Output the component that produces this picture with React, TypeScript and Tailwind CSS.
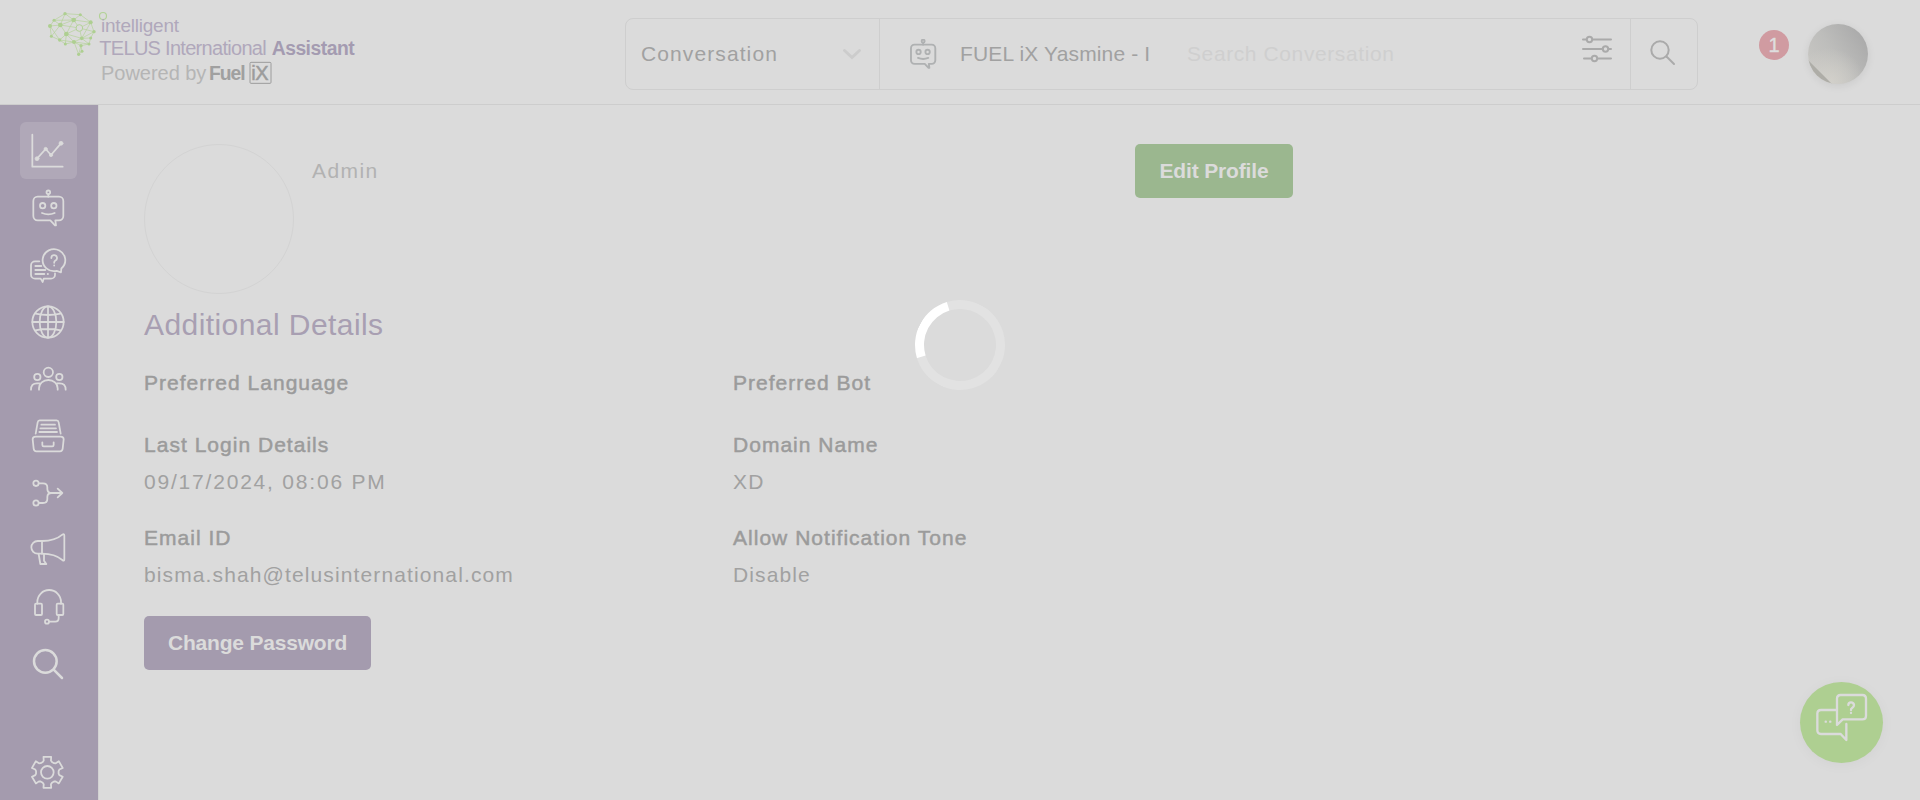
import React from "react";

const GEAR_POINTS = Array.from({ length: 6 })
  .flatMap((_, i) => {
    const base = i * 60 - 90;
    return [
      [34, -24],
      [37, -17],
      [48, -14],
      [48, 14],
      [37, 17],
      [34, 24],
    ].map(([r, offset]) => {
      const a = ((base + offset) * Math.PI) / 180;
      return `${(142 + r * Math.cos(a)).toFixed(1)},${(607 + r * Math.sin(a)).toFixed(1)}`;
    });
  })
  .join(" ");

function BotShape() {
  return (
    <>
      <circle cx="145" cy="277" r="5.5" />
      <path d="M145 283V290" />
      <path d="M151 361H113a13 13 0 0 1-13-13V303a13 13 0 0 1 13-13H177a13 13 0 0 1 13 13V348a13 13 0 0 1-13 13H166L168 376H165Z" />
      <circle cx="128" cy="317" r="8" />
      <circle cx="161.500" cy="317" r="8" />
      <path d="M126 339q19 8 38 0" />
    </>
  );
}

type NavIconProps = { viewBox: string; active?: boolean; children: React.ReactNode };

function NavIcon({ viewBox, active, children }: NavIconProps) {
  return (
    <a
      className={
        active
          ? "block size-[57px] shrink-0 rounded-md bg-[#b0a8b8]"
          : "block size-[57px] shrink-0 rounded-md"
      }
    >
      <svg
        viewBox={viewBox}
        className="size-[57px]"
        fill="none"
        stroke="#dbdbdb"
        strokeWidth="5.3"
        strokeLinecap="round"
        strokeLinejoin="round"
      >
        {children}
      </svg>
    </a>
  );
}

function Sidebar() {
  return (
    <nav className="flex w-[99px] shrink-0 flex-col border-r border-[#d2d2d2] bg-[#a49bae] pt-[17px] pl-5">
      <NavIcon viewBox="60 66 171 171" active>
        <path d="M97 104V200H188" />
        <path d="M111 176L137 147L153 165L183 130" />
        <g fill="#dbdbdb" strokeWidth="2">
          <circle cx="111" cy="176" r="6" />
          <circle cx="137" cy="147" r="5" />
          <circle cx="153" cy="165" r="5" />
          <circle cx="183" cy="130" r="6" />
        </g>
      </NavIcon>
      <NavIcon viewBox="60 237 171 171">
        <BotShape />
      </NavIcon>
      <NavIcon viewBox="60 408 171 171">
        <path d="M118 484H105a12 12 0 0 0-12 12V524a12 12 0 0 0 12 12H122L128 546L131 536H153a12 12 0 0 0 12-12V520" />
        <path d="M106 498H124M106 510H136M106 522H133M143 522h1" />
        <path d="M170 512.500L183 517L184 505.500A34 33 0 1 0 170 512.500Z" />
        <path d="M154 474a8.500 8.500 0 1 1 11.500 8q-3 1.500-3 6.500M162.500 496v.5" />
      </NavIcon>
      <NavIcon viewBox="60 579 171 171">
        <circle cx="144" cy="666" r="47" />
        <ellipse cx="144" cy="666" rx="25" ry="47" />
        <path d="M144 619V713M97 666H191M106 641q38 8 76 0M106 691q38-8 76 0" />
      </NavIcon>
      <NavIcon viewBox="60 0 171 171">
        <circle cx="145" cy="67" r="14" />
        <circle cx="112" cy="81" r="9.500" />
        <circle cx="178" cy="81" r="9.500" />
        <path d="M117 119V115a28 25 0 0 1 56 0V119M93 119q0-19 18-19h8M197 119q0-19-18-19h-8" />
      </NavIcon>
      <NavIcon viewBox="60 171 171 171">
        <path d="M107 251L113 217q1-6 6-6H170q5 0 6 6L182 251" />
        <path d="M124 224H165M121 235H168M118 246H171" />
        <path d="M107 260H182q9 0 9 8L188 296q-1 8-8 8H109q-7 0-8-8L98 268q0-8 9-8Z" />
        <path d="M127 277v8q0 4 4 4h26q4 0 4-4v-8" />
      </NavIcon>
      <NavIcon viewBox="60 342 171 171">
        <circle cx="108" cy="400" r="8" />
        <circle cx="108" cy="459" r="8" />
        <path d="M116 400h13q13 0 13 12v5q0 12 13 12q-13 0-13 12v6q0 12-13 12h-13M155 429H187M173 416L187 429L173 442" />
      </NavIcon>
      <NavIcon viewBox="60 513 171 171">
        <path d="M126 573H113a19 19 0 0 0 0 38H126Z" />
        <path d="M126 573Q165 573 187 554Q193 550 193 557V628Q193 635 187 630Q165 611 126 611" />
        <path d="M116 612L121 642H139L132 632V612" />
      </NavIcon>
      <NavIcon viewBox="60 24 171 171">
        <path d="M112 101V96a35.500 36 0 0 1 71 0V101" />
        <rect x="105" y="101" width="21" height="34" rx="3" />
        <rect x="170" y="101" width="20" height="34" rx="3" />
        <circle cx="141" cy="155" r="6" />
        <path d="M148 155h18q10 0 10-11V136" />
      </NavIcon>
      <NavIcon viewBox="60 195 171 171">
        <g strokeWidth="7.500">
          <circle cx="136" cy="274" r="34" />
          <path d="M161 299L186 324" />
        </g>
      </NavIcon>
      <div className="h-[51px] shrink-0" />
      <NavIcon viewBox="60 519 171 171">
        <polygon points={GEAR_POINTS} />
        <circle cx="142" cy="607" r="19" />
      </NavIcon>
    </nav>
  );
}

const NODES: [number, number, number][] = [
  [105, 41, 5],
  [151, 44, 4.5],
  [72, 61, 4.5],
  [131, 60, 7],
  [182, 67, 6],
  [60, 78, 6],
  [91, 75, 7],
  [109, 102, 7],
  [192, 95, 5],
  [64, 109, 4.5],
  [89, 120, 5],
  [155, 115, 5.5],
  [182, 114, 4.5],
  [106, 132, 4.5],
  [132, 126, 6],
  [177, 132, 4.5],
  [153, 137, 5],
  [156, 154, 4.5],
  [146, 163, 5],
];

function Logo() {
  return (
    <svg
      className="block h-[104px] w-[340px] shrink-0"
      viewBox="0 0 1020 312"
      fontFamily="'Liberation Sans', Arial, sans-serif"
      fontSize="60"
    >
      <path
        d="M60 78L72 61L105 41L151 44L182 67L192 95L182 114L177 132L132 126L106 132L89 120L64 109ZM72 61L91 75L131 60L105 41L91 75L60 78L89 120L109 102L91 75L64 109M131 60L109 102L155 115L192 95L148 84L182 67L131 60L151 44M131 60L148 84L109 102L132 126L155 115L148 84M109 102L106 132M132 126L153 137L177 132L155 115L182 114M132 126L146 163L156 154L153 137L146 163M91 75L148 84M89 120L132 126M72 61L131 60M182 67L155 115"
        fill="none"
        stroke="#b3d297"
        strokeWidth="2"
      />
      {NODES.map(([x, y, r]) => (
        <circle key={`${x}-${y}`} cx={x} cy={y} r={r} fill="#aecf91" />
      ))}
      <circle cx="148" cy="84" r="10" fill="#dbdbdb" stroke="#b3d297" strokeWidth="3" />
      <circle cx="219" cy="48" r="10.500" fill="none" stroke="#b3d297" strokeWidth="3.500" />
      <g fill="#b0a8bb">
        <text x="213" y="97" fontSize="57" textLength="234">intelligent</text>
        <text x="208" y="164" textLength="502">TELUS International</text>
      </g>
      <text x="725" y="164" fontSize="58" textLength="249" fontWeight="700" fill="#a49bb1">
        Assistant
      </text>
      <text x="213" y="240" textLength="316" fill="#b5b5b5">
        Powered by
      </text>
      <text x="537" y="240" fontSize="58" textLength="110" fontWeight="700" fill="#a0a0a0">
        Fuel
      </text>
      <rect x="660" y="187" width="63" height="63" rx="3" fill="none" stroke="#9c9c9c" strokeWidth="3" />
      <text x="664" y="240" textLength="52" fill="#9c9c9c" stroke="#9c9c9c" strokeWidth="1.500">
        iX
      </text>
    </svg>
  );
}

function Header() {
  return (
    <header className="flex h-[105px] shrink-0 items-start border-b border-[#cdcdcd] pl-[30px]">
      <Logo />
      <div className="mt-[18px] ml-[255px] flex h-[72px] w-[1073px] shrink-0 rounded-lg border border-[#cecece] leading-6">
        <div className="flex w-[254px] items-center justify-between border-r border-[#cecece] pr-[17px] pl-[15px]">
          <span className="tracking-[1.1px] text-[#a1a1a1]">Conversation</span>
          <svg className="h-3 w-5" viewBox="0 0 20 12" fill="none" stroke="#cccccc" strokeWidth="3" strokeLinecap="round">
            <path d="M2.500 2.500L10 9.500L17.500 2.500" />
          </svg>
        </div>
        <div className="flex flex-1 items-center border-r border-[#cecece]">
          <svg
            className="ml-[29px] h-[30px] w-[28px] shrink-0"
            viewBox="93 269 103 111"
            fill="none"
            stroke="#afb1b2"
            strokeWidth="7"
            strokeLinejoin="round"
            strokeLinecap="round"
          >
            <BotShape />
          </svg>
          <span className="ml-[23px] w-[194px] tracking-[0.15px] whitespace-nowrap text-[#a1a1a1]">
            FUEL iX Yasmine - I
          </span>
          <span className="ml-[33px] tracking-[0.6px] whitespace-nowrap text-[#cfcfcf]">Search Conversation</span>
          <svg
            className="mr-[17px] mb-[11px] ml-auto h-8 w-8"
            viewBox="0 0 32 32"
            fill="#dbdbdb"
            stroke="#aaaaaa"
            strokeWidth="2"
            strokeLinecap="round"
          >
            <path d="M2 6.500H30M2 16H30M3 25.500H30" />
            <circle cx="8.500" cy="6.500" r="2.700" />
            <circle cx="24.500" cy="16" r="2.700" />
            <circle cx="13.500" cy="25.500" r="2.700" />
          </svg>
        </div>
        <div className="flex w-[66px] items-center justify-center pr-[2px] pb-[2px]">
          <svg className="h-7 w-7" viewBox="0 0 28 28" fill="none" stroke="#aaaaaa" strokeWidth="2" strokeLinecap="round">
            <circle cx="11" cy="11" r="8.700" />
            <path d="M17.500 17.500L25 25" />
          </svg>
        </div>
      </div>
      <span className="mt-[30px] ml-[61px] flex size-[30px] shrink-0 items-center justify-center rounded-full bg-[#d09ba1] text-[20px] text-[#dedede] [-webkit-text-stroke:0.4px]">
        1
      </span>
      <div className="mt-6 ml-[19px] size-[60px] shrink-0 rounded-full shadow-[0_2px_8px_rgba(0,0,0,0.08)]">
        <svg className="size-[60px] rounded-full" viewBox="0 0 60 60">
          <defs>
            <linearGradient id="avatarTone" x1="0" y1="0.8" x2="0.9" y2="0.2">
              <stop offset="0" stopColor="#c9c8c4" />
              <stop offset="0.5" stopColor="#bdbdbb" />
              <stop offset="1" stopColor="#ababab" />
            </linearGradient>
            <radialGradient id="avatarGlow" cx="0.35" cy="1" r="0.6">
              <stop offset="0" stopColor="#d3d1cb" />
              <stop offset="1" stopColor="#d3d1cb" stopOpacity="0" />
            </radialGradient>
          </defs>
          <rect width="60" height="60" fill="url(#avatarTone)" />
          <rect width="60" height="60" fill="url(#avatarGlow)" />
          <path d="M0 36L24 60H0Z" fill="#aeada7" />
        </svg>
      </div>
    </header>
  );
}

function Field({ label, value, wide }: { label: string; value?: string; wide?: boolean }) {
  return (
    <div className="flex flex-col gap-[13px] leading-6">
      <span className="tracking-[1.02px] text-[#9b9b9b] [-webkit-text-stroke:0.5px]">{label}</span>
      {value && (
        <span className={wide ? "tracking-[1.8px] text-[#a1a1a1]" : "tracking-[1.12px] text-[#a1a1a1]"}>{value}</span>
      )}
    </div>
  );
}

function Profile() {
  return (
    <main className="flex-1 pt-[39px] pl-[45px]">
      <div className="flex w-[1149px] items-start">
        <div className="size-[150px] rounded-full border border-[#d3d3d3]" />
        <span className="mt-[15px] ml-[18px] leading-6 tracking-[1.4px] text-[#b2b2b2]">Admin</span>
        <button className="ml-auto h-[54px] w-[158px] rounded-[5px] bg-[#9bb78f] pb-px font-bold tracking-[-0.15px] text-[#dbdbdb]">
          Edit Profile
        </button>
      </div>
      <h2 className="mt-[13px] text-[30px] leading-9 tracking-[0.43px] text-[#a89fb2]">Additional Details</h2>
      <div className="mt-7 grid grid-cols-[589px_1fr]">
        <Field label="Preferred Language" />
        <Field label="Preferred Bot" />
      </div>
      <div className="mt-[38px] grid grid-cols-[589px_1fr] gap-y-8">
        <Field label="Last Login Details" value="09/17/2024, 08:06 PM" wide />
        <Field label="Domain Name" value="XD" />
        <Field label="Email ID" value="bisma.shah@telusinternational.com" />
        <Field label="Allow Notification Tone" value="Disable" />
      </div>
      <button className="mt-[29px] block h-[54px] w-[227px] rounded-[5px] bg-[#a49bae] pb-px font-bold tracking-[-0.2px] text-[#dbdbdb]">
        Change Password
      </button>
    </main>
  );
}

export default function App() {
  return (
    <div className="relative flex h-[800px] w-[1920px] flex-col overflow-hidden bg-[#dbdbdb] font-['Liberation_Sans',Arial,sans-serif] text-[21px]">
      <Header />
      <div className="flex min-h-0 flex-1">
        <Sidebar />
        <Profile />
      </div>

      <div className="absolute top-[300px] left-[915px] size-[90px] rotate-28 rounded-full border-[9px] border-[#e2e2e2] border-l-white" />

      <button className="absolute top-[682px] left-[1800px] h-[81px] w-[83px] rounded-[50%] bg-[#aecf91] shadow-[0_2px_14px_rgba(0,0,0,0.04)]">
        <svg
          className="h-[81px] w-[83px]"
          viewBox="60 36 249 243"
          fill="none"
          stroke="#dbdbdb"
          strokeWidth="7"
          strokeLinecap="round"
          strokeLinejoin="round"
        >
          <path d="M171 165V86q0-11 11-11H247q11 0 11 11V137q0 11-11 11H188Z" />
          <path d="M168 120H123q-11 0-11 11V181q0 11 11 11H182L199 210V162" />
          <path d="M137 155h.5M150.500 155h.5M205 105q0-8 8-8t9 8q0 5-5 8t-4 7M213 128.500v.5" />
        </svg>
      </button>
    </div>
  );
}
